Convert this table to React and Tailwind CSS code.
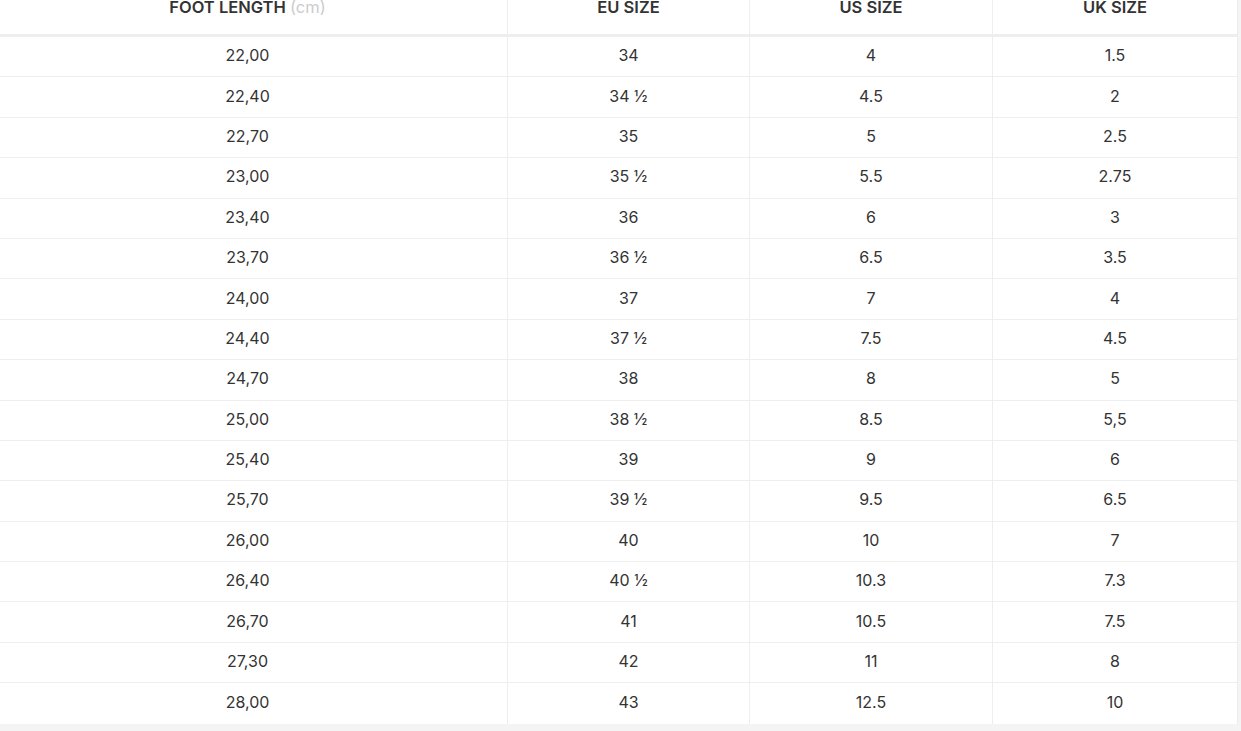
import React from "react";

const rows = [
  ["22,00", "34", "4", "1.5"],
  ["22,40", "34 ½", "4.5", "2"],
  ["22,70", "35", "5", "2.5"],
  ["23,00", "35 ½", "5.5", "2.75"],
  ["23,40", "36", "6", "3"],
  ["23,70", "36 ½", "6.5", "3.5"],
  ["24,00", "37", "7", "4"],
  ["24,40", "37 ½", "7.5", "4.5"],
  ["24,70", "38", "8", "5"],
  ["25,00", "38 ½", "8.5", "5,5"],
  ["25,40", "39", "9", "6"],
  ["25,70", "39 ½", "9.5", "6.5"],
  ["26,00", "40", "10", "7"],
  ["26,40", "40 ½", "10.3", "7.3"],
  ["26,70", "41", "10.5", "7.5"],
  ["27,30", "42", "11", "8"],
  ["28,00", "43", "12.5", "10"],
];

const cols = "grid grid-cols-[507px_242px_243px_245px]";

export default function App() {
  return (
    <div
      className="w-[1241px] h-[731px] overflow-hidden bg-[#f4f4f4] text-[#333333]"
      style={{ fontFamily: "Inter, 'Open Sans', sans-serif" }}
    >
      <div className="w-[1238px] bg-white border-r border-[#ececec]">
        <div className={`${cols} h-[37px] border-b-[3px] border-[#eeeeee]`}>
          <div className="text-center text-[16.5px] font-semibold uppercase leading-[14px] pr-[12px]">
            Foot Length <span className="normal-case font-normal text-[#cccccc]">(cm)</span>
          </div>
          <div className="text-center text-[16.5px] font-semibold uppercase leading-[14px] border-l border-[#eeeeee]">
            EU Size
          </div>
          <div className="text-center text-[16.5px] font-semibold uppercase leading-[14px] border-l border-[#eeeeee]">
            US Size
          </div>
          <div className="text-center text-[16.5px] font-semibold uppercase leading-[14px] border-l border-[#eeeeee]">
            UK Size
          </div>
        </div>
        {rows.map((r, i) => (
          <div
            key={i}
            className={`${cols} h-[40.4px] text-[16px] ${i < rows.length - 1 ? "border-b border-[#eeeeee]" : ""}`}
          >
            {r.map((c, j) => (
              <div
                key={j}
                className={`flex items-center justify-center pb-[3px] ${j === 0 ? "pr-[12px]" : "border-l border-[#eeeeee]"}`}
              >
                {c}
              </div>
            ))}
          </div>
        ))}
      </div>
    </div>
  );
}
